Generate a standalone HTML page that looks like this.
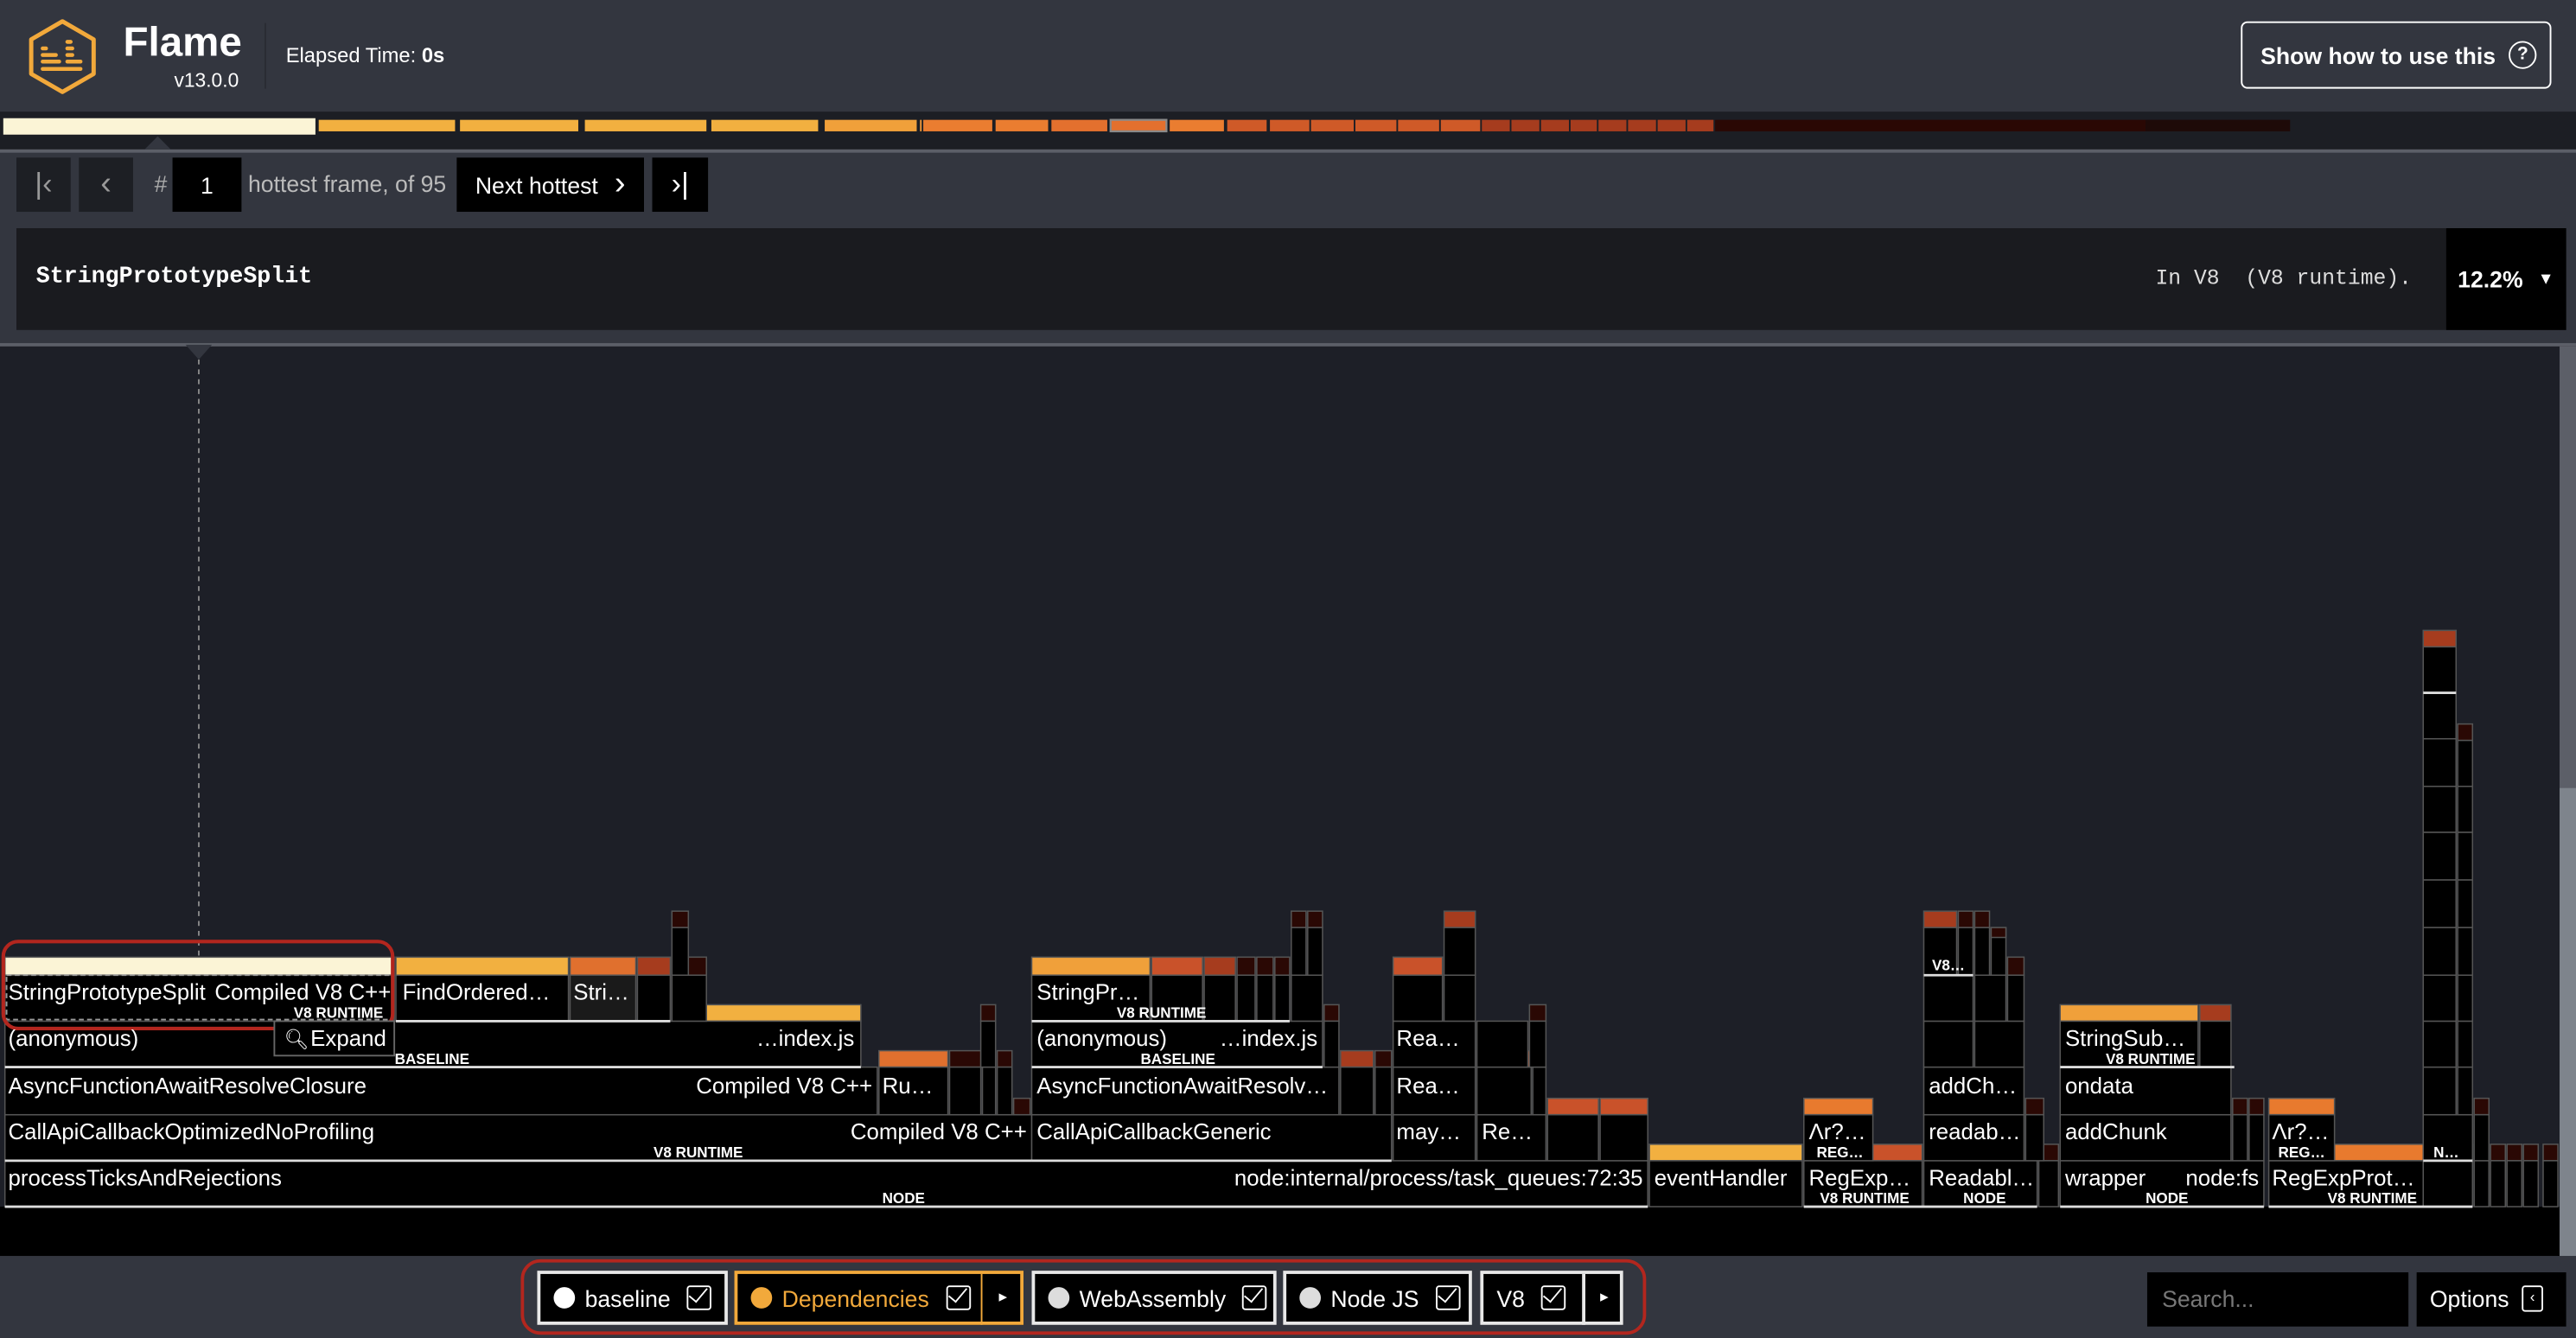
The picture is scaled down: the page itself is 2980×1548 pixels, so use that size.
<!DOCTYPE html>
<html><head><meta charset="utf-8"><style>
html,body{margin:0;padding:0;background:#33363f;overflow:hidden;width:2980px;height:1548px}
#w{position:absolute;left:0;top:0;width:1568px;height:815px;transform:scale(1.90051,1.89939);transform-origin:0 0;background:#33363f;font-family:"Liberation Sans",sans-serif;color:#fff}
.a{position:absolute}
.btn{position:absolute;top:96px;height:33px;background:#000;display:flex;align-items:center;justify-content:center;font-size:14px}
.mono{font-family:"Liberation Mono",monospace}
.fb{position:absolute;top:774px;height:33px;background:#000;border:2px solid #e8e8e8;box-sizing:border-box;display:flex;align-items:center;font-size:14px}
.dot{width:13px;height:13px;border-radius:50%;background:#fff;margin:0 6px 0 8px}
.ck{width:13px;height:13px;border:1.5px solid #fff;border-radius:2px;margin-left:10px;position:relative}
.ck:after{content:"";position:absolute;left:3px;top:-2px;width:5px;height:10px;border-right:1.5px solid #fff;border-bottom:1.5px solid #fff;transform:rotate(40deg)}
</style></head><body><div id="w">
<!-- header -->
<svg class="a" style="left:0;top:0" width="70" height="68" viewBox="0 0 70 68">
<path d="M38 13 L57 24 L57 45 L38 56 L19 45 L19 24 Z" fill="none" stroke="#f2a93b" stroke-width="2.6" stroke-linejoin="round"/>
<g stroke="#f2a93b" stroke-width="2.4" stroke-linecap="round">
<line x1="26" y1="29.5" x2="28" y2="29.5"/><line x1="26" y1="33.5" x2="34" y2="33.5"/><line x1="26" y1="37.5" x2="36" y2="37.5"/><line x1="26" y1="42" x2="49" y2="42"/>
<line x1="41" y1="25.5" x2="43" y2="25.5"/><line x1="41" y1="29.5" x2="44" y2="29.5"/><line x1="41" y1="33.5" x2="44" y2="33.5"/><line x1="41" y1="37.5" x2="49" y2="37.5"/>
</g></svg>
<div class="a" style="left:75px;top:12px;font-size:25px;font-weight:bold">Flame</div>
<div class="a" style="left:106px;top:42px;font-size:12px">v13.0.0</div>
<div class="a" style="left:161px;top:14px;width:1px;height:40px;background:#2a2c33"></div>
<div class="a" style="left:174px;top:27px;font-size:12.5px">Elapsed Time: <b>0s</b></div>
<div class="a" style="left:1364px;top:13px;width:189px;height:41px;border:1.5px solid #fff;border-radius:4px;box-sizing:border-box;font-size:14px;font-weight:bold;display:flex;align-items:center;padding-left:11px">Show how to use this<span style="display:inline-block;width:15px;height:15px;border:1.5px solid #fff;border-radius:50%;font-size:11px;text-align:center;line-height:15px;margin-left:8px">?</span></div>
<!-- timeline -->
<div class="a" style="left:0;top:68px;width:1568px;height:23px;background:#1c1e24"></div>
<div class="a" style="left:0;top:91px;width:1568px;height:1.5px;background:#5c5f68"></div>
<svg class="a" style="left:0;top:68px" width="1568" height="25">
<rect x="2" y="4" width="190" height="10" fill="#fbf4d6"/>
<g fill="#f2b040"><rect x="194" y="5" width="83" height="7"/><rect x="280" y="5" width="72" height="7"/><rect x="356" y="5" width="74" height="7"/><rect x="433" y="5" width="65" height="7"/><rect x="502" y="5" width="56" height="7" fill="#f0a03a"/></g>
<rect x="560" y="5" width="1" height="7" fill="#f0993a"/>
<g fill="#ea7d30"><rect x="562" y="5" width="42" height="7"/><rect x="606" y="5" width="32" height="7"/><rect x="640" y="5" width="34" height="7" fill="#e3702e"/><rect x="676" y="5" width="34" height="7" fill="#e3702e" stroke="#8a8a8a" stroke-width="1.2"/><rect x="712" y="5" width="33" height="7"/></g>
<g fill="#cf5a28"><rect x="747" y="5" width="24" height="7"/><rect x="773" y="5" width="24" height="7"/><rect x="798" y="5" width="26" height="7"/><rect x="825" y="5" width="25" height="7"/><rect x="851" y="5" width="25" height="7"/><rect x="877" y="5" width="24" height="7"/></g>
<g fill="#a63c1e"><rect x="902" y="5" width="17" height="7"/><rect x="920" y="5" width="17" height="7"/><rect x="938" y="5" width="17" height="7"/><rect x="956" y="5" width="16" height="7"/><rect x="973" y="5" width="17" height="7"/><rect x="991" y="5" width="17" height="7"/><rect x="1009" y="5" width="17" height="7"/><rect x="1027" y="5" width="16" height="7"/></g>
<rect x="1044" y="5" width="262" height="7" fill="#2a0804"/>
<rect x="1306" y="5" width="88" height="7" fill="#1e0a08"/>
<path d="M88 23 L96 15 L104 23 Z" fill="#33363f"/>
</svg>
<!-- nav -->
<div class="btn" style="left:10px;width:33px;background:#1d1f24;color:#999;font-size:18px">|&lsaquo;</div>
<div class="btn" style="left:48px;width:33px;background:#1d1f24;color:#999;font-size:20px">&lsaquo;</div>
<div class="a" style="left:94px;top:104px;font-size:14px;color:#aaa">#</div>
<div class="btn" style="left:105px;width:42px">1</div>
<div class="a" style="left:151px;top:104px;font-size:14px;color:#bbb">hottest frame, of 95</div>
<div class="btn" style="left:278px;width:114px">Next hottest<span style="font-size:20px;margin-left:10px">&rsaquo;</span></div>
<div class="btn" style="left:397px;width:34px;font-size:18px">&rsaquo;|</div>
<!-- info bar -->
<div class="a" style="left:10px;top:139px;width:1552px;height:62px;background:#1a1b1f"></div>
<div class="a mono" style="left:22px;top:161px;font-size:14px;font-weight:bold">StringPrototypeSplit</div>
<div class="a mono" style="left:1312px;top:162px;font-size:13px;color:#ddd;white-space:pre">In V8  (V8 runtime).</div>
<div class="a" style="left:1489px;top:139px;width:73px;height:62px;background:#000;font-size:14px;font-weight:bold;display:flex;align-items:center;padding-left:7px;box-sizing:border-box">12.2%<span style="font-size:10px;margin-left:9px">&#9660;</span></div>
<!-- flame area -->
<div class="a" style="left:0;top:210px;width:1568px;height:555px;background:#1d1f27"></div>
<div class="a" style="left:0;top:209px;width:1568px;height:1.5px;background:#5c5f68"></div>
<div class="a" style="left:1558px;top:211px;width:10px;height:554px;background:#5c5f68"></div>
<div class="a" style="left:1558px;top:480px;width:10px;height:285px;background:#7e848c"></div>
<div class="a" style="left:0;top:735px;width:1558px;height:30px;background:#000"></div>
<svg class="a" style="left:0;top:209px" width="1568" height="530" viewBox="0 209 1568 530" font-family="Liberation Sans, sans-serif">
<path d="M113 210 L121 219 L129 210 Z" fill="#33363f"/>
<line x1="121" y1="219" x2="121" y2="583" stroke="#888" stroke-dasharray="3,3"/>
<g stroke="#555" stroke-width="0.8" fill="#000">
<rect x="3" y="707" width="1000" height="28"/>
<rect x="1004" y="697" width="93" height="10" fill="#f2b040"/><rect x="1004" y="707" width="93" height="28"/>
<rect x="1140" y="697" width="30" height="10" fill="#c9522a"/><rect x="1098" y="707" width="72" height="28"/>
<rect x="1171" y="707" width="69" height="28"/>
<rect x="1241" y="697" width="12" height="10" fill="#2a0804"/><rect x="1241" y="707" width="12" height="28"/>
<rect x="1254" y="707" width="124" height="28"/>
<rect x="1421" y="697" width="54" height="10" fill="#e87a2e"/><rect x="1381" y="707" width="94" height="28"/>
<rect x="1475" y="707" width="30" height="28"/>
<rect x="1506" y="697" width="9" height="10" fill="#2a0804"/><rect x="1506" y="707" width="9" height="28"/>
<rect x="1516" y="697" width="9" height="10" fill="#2a0804"/><rect x="1516" y="707" width="9" height="28"/>
<rect x="1526" y="697" width="9" height="10" fill="#2a0804"/><rect x="1526" y="707" width="9" height="28"/>
<rect x="1536" y="697" width="9" height="10" fill="#2a0804"/><rect x="1536" y="707" width="9" height="28"/>
<rect x="1548" y="697" width="9" height="10" fill="#2a0804"/><rect x="1548" y="707" width="9" height="28"/>
<rect x="3" y="679" width="625" height="28"/>
<rect x="628" y="679" width="219" height="28"/>
<rect x="848" y="679" width="50" height="28"/><rect x="899" y="679" width="42" height="28"/>
<rect x="942" y="669" width="31" height="10" fill="#c9522a"/><rect x="942" y="679" width="31" height="28"/>
<rect x="974" y="669" width="29" height="10" fill="#c9522a"/><rect x="974" y="679" width="29" height="28"/>
<rect x="1098" y="669" width="42" height="10" fill="#e87a2e"/><rect x="1098" y="679" width="42" height="28"/>
<rect x="1171" y="679" width="61" height="28"/>
<rect x="1233" y="669" width="11" height="10" fill="#2a0804"/><rect x="1233" y="679" width="11" height="28"/>
<rect x="1254" y="679" width="104" height="28"/>
<rect x="1359" y="669" width="9" height="10" fill="#2a0804"/><rect x="1359" y="679" width="9" height="28"/>
<rect x="1369" y="669" width="9" height="10" fill="#2a0804"/><rect x="1369" y="679" width="9" height="28"/>
<rect x="1381" y="669" width="40" height="10" fill="#e87a2e"/><rect x="1381" y="679" width="40" height="28"/>
<rect x="1475" y="679" width="30" height="28"/>
<rect x="1506" y="669" width="9" height="10" fill="#2a0804"/><rect x="1506" y="679" width="9" height="28"/>
<rect x="3" y="650" width="531" height="29"/>
<rect x="535" y="640" width="42" height="10" fill="#e0702e"/><rect x="535" y="650" width="42" height="29"/>
<rect x="578" y="640" width="19" height="10" fill="#2a0804"/><rect x="578" y="650" width="19" height="29"/>
<rect x="598" y="650" width="8" height="29"/>
<rect x="607" y="640" width="9" height="10" fill="#2a0804"/><rect x="607" y="650" width="9" height="29"/>
<rect x="617" y="669" width="10" height="10" fill="#2a0804"/>
<rect x="628" y="650" width="187" height="29"/>
<rect x="816" y="640" width="20" height="10" fill="#a63c1e"/><rect x="816" y="650" width="20" height="29"/>
<rect x="837" y="640" width="10" height="10" fill="#2a0804"/><rect x="837" y="650" width="10" height="29"/>
<rect x="848" y="650" width="50" height="29"/>
<rect x="899" y="640" width="33" height="10" fill="#c9522a"/><rect x="899" y="650" width="33" height="29"/>
<rect x="933" y="650" width="8" height="29"/>
<rect x="1171" y="650" width="61" height="29"/>
<rect x="1254" y="650" width="104" height="29"/>
<rect x="1475" y="650" width="20" height="29"/><rect x="1496" y="650" width="9" height="29"/>
<rect x="430" y="612" width="94" height="10" fill="#f2b040"/><rect x="3" y="622" width="521" height="28"/>
<rect x="597" y="612" width="9" height="10" fill="#2a0804"/><rect x="597" y="622" width="9" height="28"/>
<rect x="628" y="622" width="177" height="28"/>
<rect x="806" y="612" width="9" height="10" fill="#2a0804"/><rect x="806" y="622" width="9" height="28"/>
<rect x="848" y="622" width="50" height="28"/><rect x="899" y="622" width="31" height="28"/>
<rect x="931" y="612" width="10" height="10" fill="#2a0804"/><rect x="931" y="622" width="10" height="28"/>
<rect x="1171" y="622" width="30" height="28"/><rect x="1202" y="622" width="30" height="28"/>
<rect x="1254" y="612" width="84" height="10" fill="#f0a03a"/><rect x="1254" y="622" width="84" height="28"/>
<rect x="1339" y="612" width="19" height="10" fill="#a63c1e"/><rect x="1339" y="622" width="19" height="28"/>
<rect x="1475" y="622" width="20" height="28"/><rect x="1496" y="622" width="9" height="28"/>
<rect x="3" y="583" width="237" height="11" fill="#fbf4d6"/><rect x="3" y="594" width="237" height="28"/>
<rect x="241" y="583" width="105" height="11" fill="#f2b040"/><rect x="241" y="594" width="105" height="28"/>
<rect x="347" y="583" width="40" height="11" fill="#e0702e"/><rect x="347" y="594" width="40" height="28" fill="#1a1a1a"/>
<rect x="388" y="583" width="20" height="11" fill="#a63c1e"/><rect x="388" y="594" width="20" height="28"/>
<rect x="409" y="583" width="21" height="11" fill="#2a0804"/><rect x="409" y="594" width="21" height="28"/>
<rect x="628" y="583" width="72" height="11" fill="#f0a03a"/><rect x="628" y="594" width="72" height="28"/>
<rect x="701" y="583" width="31" height="11" fill="#c9522a"/><rect x="701" y="594" width="31" height="28"/>
<rect x="733" y="583" width="19" height="11" fill="#a63c1e"/><rect x="733" y="594" width="19" height="28"/>
<rect x="753" y="583" width="11" height="11" fill="#2a0804"/><rect x="753" y="594" width="11" height="28"/>
<rect x="765" y="583" width="10" height="11" fill="#2a0804"/><rect x="765" y="594" width="10" height="28"/>
<rect x="776" y="583" width="9" height="11" fill="#2a0804"/><rect x="776" y="594" width="9" height="28"/>
<rect x="786" y="594" width="19" height="28"/>
<rect x="848" y="583" width="30" height="11" fill="#c9522a"/><rect x="848" y="594" width="30" height="28"/>
<rect x="879" y="594" width="19" height="28"/>
<rect x="1171" y="594" width="30" height="28"/><rect x="1202" y="594" width="19" height="28"/>
<rect x="1222" y="583" width="10" height="11" fill="#2a0804"/><rect x="1222" y="594" width="10" height="28"/>
<rect x="1475" y="594" width="20" height="28"/><rect x="1496" y="594" width="9" height="28"/>
<rect x="409" y="555" width="10" height="10" fill="#2a0804"/><rect x="409" y="565" width="10" height="29"/>
<rect x="786" y="555" width="9" height="10" fill="#2a0804"/><rect x="786" y="565" width="9" height="29"/>
<rect x="796" y="555" width="9" height="10" fill="#2a0804"/><rect x="796" y="565" width="9" height="29"/>
<rect x="879" y="555" width="19" height="10" fill="#a63c1e"/><rect x="879" y="565" width="19" height="29"/>
<rect x="1171" y="555" width="20" height="10" fill="#a63c1e"/><rect x="1171" y="565" width="20" height="29"/>
<rect x="1192" y="555" width="9" height="10" fill="#2a0804"/><rect x="1192" y="565" width="9" height="29"/>
<rect x="1202" y="555" width="9" height="10" fill="#2a0804"/><rect x="1202" y="565" width="9" height="29"/>
<rect x="1212" y="565" width="9" height="29" /><rect x="1212" y="565" width="9" height="6" fill="#2a0804"/>
<rect x="1475" y="384" width="20" height="10" fill="#a63c1e"/>
<rect x="1475" y="394" width="20" height="28"/><rect x="1475" y="422" width="20" height="28"/><rect x="1475" y="450" width="20" height="29"/><rect x="1475" y="479" width="20" height="28"/><rect x="1475" y="507" width="20" height="29"/><rect x="1475" y="536" width="20" height="29"/><rect x="1475" y="565" width="20" height="29"/>
<rect x="1496" y="441" width="9" height="10" fill="#2a0804"/>
<rect x="1496" y="451" width="9" height="28"/><rect x="1496" y="479" width="9" height="28"/><rect x="1496" y="507" width="9" height="29"/><rect x="1496" y="536" width="9" height="29"/><rect x="1496" y="565" width="9" height="29"/>
</g>
<g stroke="#ddd" stroke-width="1.5">
<line x1="3" y1="735" x2="1003" y2="735"/><line x1="3" y1="707" x2="628" y2="707"/><line x1="3" y1="650" x2="524" y2="650"/>
<line x1="241" y1="622" x2="408" y2="622"/><line x1="628" y1="707" x2="847" y2="707"/><line x1="628" y1="650" x2="805" y2="650"/><line x1="628" y1="622" x2="785" y2="622"/>
<line x1="1098" y1="735" x2="1240" y2="735"/><line x1="1254" y1="735" x2="1378" y2="735"/><line x1="1381" y1="735" x2="1505" y2="735"/>
<line x1="1171" y1="594" x2="1201" y2="594"/><line x1="1254" y1="650" x2="1360" y2="650"/><line x1="1475" y1="707" x2="1505" y2="707"/><line x1="1475" y1="422" x2="1495" y2="422"/>
</g>
<rect x="4" y="594" width="235" height="27" fill="none" stroke="#999" stroke-dasharray="3,2"/>
<rect x="2" y="573.5" width="237" height="53" rx="9" fill="none" stroke="#b3261e" stroke-width="2.2"/>
<rect x="167" y="622" width="73" height="21" fill="#000" stroke="#666"/>
<g fill="#fff" font-size="13.6">
<text x="5" y="609">StringPrototypeSplit</text><text x="238" y="609" text-anchor="end">Compiled V8 C++</text>
<text x="245" y="609">FindOrdered…</text><text x="349" y="609">Stri…</text>
<text x="5" y="637">(anonymous)</text><text x="520" y="637" text-anchor="end">…index.js</text>
<text x="173" y="637" font-size="12">&#x1F50D;&#xFE0E;</text><text x="189" y="637">Expand</text>
<text x="5" y="666">AsyncFunctionAwaitResolveClosure</text><text x="531" y="666" text-anchor="end">Compiled V8 C++</text><text x="537" y="666">Ru…</text>
<text x="5" y="694">CallApiCallbackOptimizedNoProfiling</text><text x="625" y="694" text-anchor="end">Compiled V8 C++</text>
<text x="5" y="722">processTicksAndRejections</text><text x="1000" y="722" text-anchor="end">node:internal/process/task_queues:72:35</text>
<text x="631" y="609">StringPr…</text>
<text x="631" y="637">(anonymous)</text><text x="802" y="637" text-anchor="end">…index.js</text>
<text x="631" y="666">AsyncFunctionAwaitResolv…</text>
<text x="631" y="694">CallApiCallbackGeneric</text>
<text x="850" y="637">Rea…</text><text x="850" y="666">Rea…</text><text x="850" y="694">may…</text><text x="902" y="694">Re…</text>
<text x="1007" y="722">eventHandler</text>
<text x="1101" y="694">Λr?…</text><text x="1101" y="722">RegExp…</text>
<text x="1174" y="666">addCh…</text><text x="1174" y="694">readab…</text><text x="1174" y="722">Readabl…</text>
<text x="1257" y="637">StringSub…</text><text x="1257" y="666">ondata</text><text x="1257" y="694">addChunk</text>
<text x="1257" y="722">wrapper</text><text x="1375" y="722" text-anchor="end">node:fs</text>
<text x="1383" y="694">Λr?…</text><text x="1383" y="722">RegExpProt…</text>
</g>
<g fill="#fff" font-size="9" font-weight="bold" text-anchor="middle">
<text x="206" y="620">V8 RUNTIME</text><text x="263" y="648">BASELINE</text><text x="425" y="705">V8 RUNTIME</text><text x="550" y="733">NODE</text>
<text x="707" y="620">V8 RUNTIME</text><text x="717" y="648">BASELINE</text>
<text x="1186" y="591">V8…</text><text x="1120" y="705">REG…</text><text x="1135" y="733">V8 RUNTIME</text><text x="1208" y="733">NODE</text>
<text x="1309" y="648">V8 RUNTIME</text><text x="1319" y="733">NODE</text><text x="1401" y="705">REG…</text><text x="1444" y="733">V8 RUNTIME</text><text x="1489" y="705">N…</text>
</g>
</svg>
<!-- footer -->
<div class="a" style="left:317px;top:767px;width:685px;height:46px;border:2.2px solid #b3261e;border-radius:12px;box-sizing:border-box"></div>
<div class="fb" style="left:327px;width:116px"><span class="dot"></span>baseline<span class="ck"></span></div>
<div class="fb" style="left:447px;width:176px;border-color:#f2a93b;color:#f2a93b"><span class="dot" style="background:#f2a93b"></span>Dependencies<span class="ck" style="border-color:#fff"></span><span style="position:absolute;left:148px;top:0;width:1px;height:31px;background:#f2a93b"></span><span style="position:absolute;left:159px;color:#fff;font-size:10px">&#9656;</span></div>
<div class="fb" style="left:628px;width:149px"><span class="dot" style="background:#ddd"></span>WebAssembly<span class="ck"></span></div>
<div class="fb" style="left:781px;width:115px"><span class="dot" style="background:#ddd"></span>Node JS<span class="ck"></span></div>
<div class="fb" style="left:901px;width:87px"><span style="margin-left:8px">V8</span><span class="ck"></span><span style="position:absolute;left:60px;top:0;width:1.5px;height:31px;background:#e8e8e8"></span><span style="position:absolute;left:71px;font-size:10px">&#9656;</span></div>
<div class="a" style="left:1307px;top:775px;width:159px;height:33px;background:#000;color:#777;font-size:14px;line-height:33px;padding-left:9px;box-sizing:border-box">Search...</div>
<div class="a" style="left:1471px;top:775px;width:91px;height:33px;background:#000;font-size:14px;line-height:33px;padding-left:8px;box-sizing:border-box">Options<span style="position:absolute;left:64px;top:8px;width:13px;height:16px;border:1.5px solid #fff;border-radius:2px;box-sizing:border-box;font-size:9px;line-height:13px;text-align:center">&lsaquo;</span></div>
</div></body></html>
